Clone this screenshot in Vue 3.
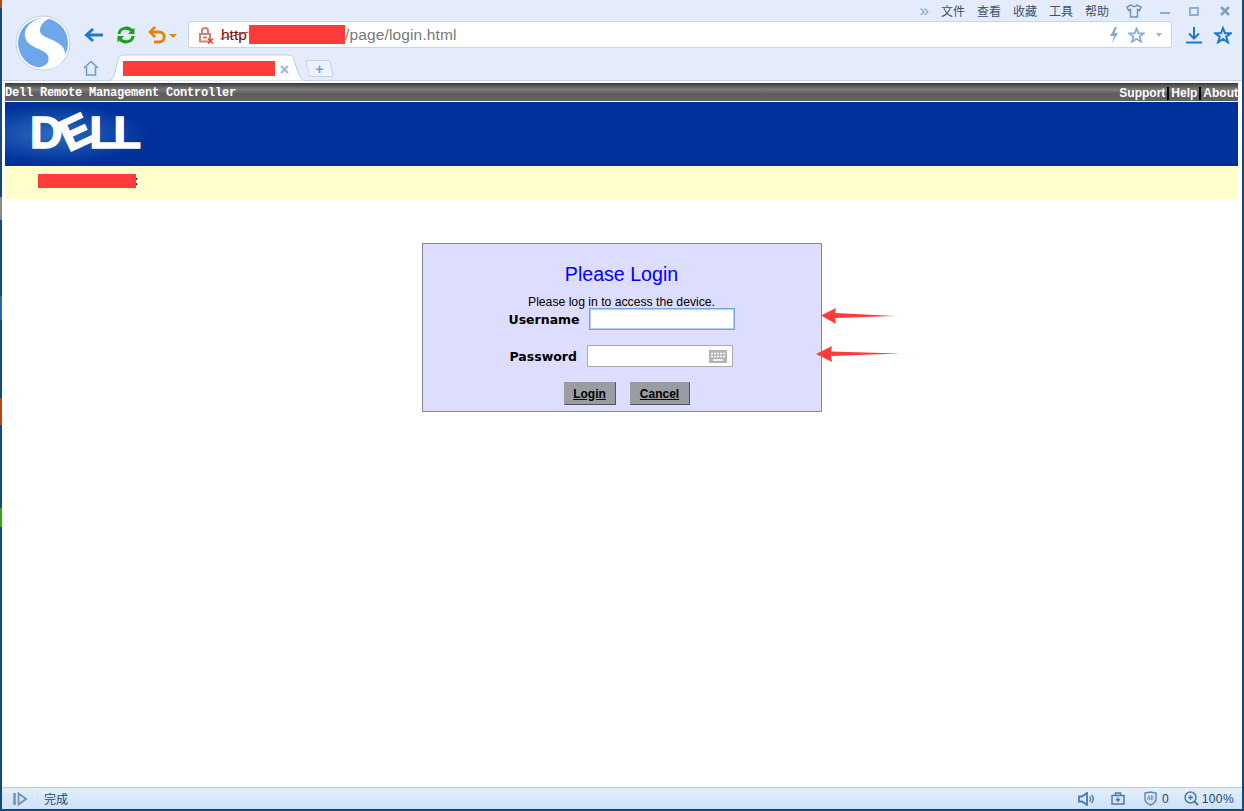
<template>
  <div class="window">
    <header class="toolbar">
      <svg class="logo" width="56" height="56" viewBox="0 0 56 56">
        <circle cx="28" cy="28" r="27" fill="#fff" stroke="#b5d0f0" />
        <circle cx="28" cy="28" r="25" fill="#6ea6ea" />
        <path d="M30 3C18 3 9 12 10 21C11 29 19 32 26 35C32 38 35 41 33 47C31 51 24 53 19 53C28 56 49 55 50 38C50 30 40 26 33 23C28 21 24 18 25 14C26 9 30 5 36 3Z" fill="#fff" />
      </svg>
      <div class="toolbar-main">
        <div class="menu-row">
          <span class="more">»</span>
          <span v-for="item in menus" :key="item" class="menu-item">{{ item }}</span>
          <svg class="shirt" width="16" height="14" viewBox="0 0 16 14">
            <path d="M5 1L1 3L2.500 6.500L4.500 5.500V13H11.500V5.500L13.500 6.500L15 3L11 1C10 3 6 3 5 1Z" fill="none" stroke="#6f93b8" stroke-width="1.500" />
          </svg>
          <span class="win-btn win-min"></span>
          <span class="win-btn win-max"></span>
          <svg class="win-close" width="10" height="10" viewBox="0 0 10 10">
            <path d="M1 1L9 9M9 1L1 9" stroke="#7f9fc2" stroke-width="2.500" />
          </svg>
        </div>

        <div class="address-row">
          <svg width="20" height="16" viewBox="0 0 20 16">
            <path d="M19 8H3M9 2L2.500 8L9 14" fill="none" stroke="#1e7ac8" stroke-width="3" />
          </svg>
          <svg class="reload" width="20" height="20" viewBox="0 0 20 20">
            <path d="M3 9C3.500 3 12 1 16 6" fill="none" stroke="#17a117" stroke-width="3" />
            <path d="M18.500 2.500V9H12Z" fill="#17a117" />
            <path d="M17 11C16.500 17 8 19 4 14" fill="none" stroke="#17a117" stroke-width="3" />
            <path d="M1.500 17.500V11H8Z" fill="#17a117" />
          </svg>
          <svg class="undo" width="18" height="18" viewBox="0 0 18 18">
            <path d="M4 6H11C18 6 18 16 11 16H6" fill="none" stroke="#e5830f" stroke-width="3" />
            <path d="M7 1L2 6L7 11" fill="none" stroke="#e5830f" stroke-width="2.500" />
          </svg>
          <span class="caret caret-orange"></span>

          <div class="address">
            <svg class="lock" width="16" height="18" viewBox="0 0 16 18">
              <path d="M4 8V4.500C4 1 10 1 10 4.500V8" fill="none" stroke="#d08078" stroke-width="2" />
              <path d="M2 8H12V15.500H2Z" fill="none" stroke="#d08078" stroke-width="2" />
              <rect x="5" y="10.500" width="4" height="2" fill="#d08078" />
              <path d="M10 12.500L15 17.500M15 12.500L10 17.500" stroke="#d8453c" stroke-width="1.500" />
            </svg>
            <span class="scheme">http</span>
            <span class="redact redact-host"></span>
            <span class="path">/page/login.html</span>
            <svg class="bolt" width="10" height="16" viewBox="0 0 10 16">
              <path d="M6 0L1 9H5L3 16L9 6H5.500L8 0Z" fill="#86abd6" />
            </svg>
            <svg class="star-small" width="17" height="16" viewBox="0 0 18 17">
              <path d="M9 1.500L11 6.800H16.800L12.200 10.200L13.900 15.800L9 12.500L4.100 15.800L5.800 10.200L1.200 6.800H7Z" fill="none" stroke="#86abd6" stroke-width="1.800" />
            </svg>
            <span class="caret caret-grey"></span>
          </div>

          <svg class="download" width="16" height="18" viewBox="0 0 16 18">
            <path d="M8 1V12M3 7.500L8 12.500L13 7.500" fill="none" stroke="#1e7ac8" stroke-width="2" />
            <path d="M0 16.500H16" stroke="#1e7ac8" stroke-width="2" />
          </svg>
          <svg class="star" width="18" height="18" viewBox="0 0 18 17">
            <path d="M9 1.500L11 6.800H16.800L12.200 10.200L13.900 15.800L9 12.500L4.100 15.800L5.800 10.200L1.200 6.800H7Z" fill="none" stroke="#1e7ac8" stroke-width="2" />
          </svg>
        </div>

        <div class="tab-row">
          <svg class="home" width="16" height="16" viewBox="0 0 16 16">
            <path d="M1 8L8 1.500L15 8M3.500 7V15H12.500V7" fill="none" stroke="#6f9ccb" stroke-width="1.600" />
          </svg>
          <div class="tab">
            <svg class="tab-shape" width="197" height="27" viewBox="0 0 197 27">
              <path d="M0 26.500H1C5 26 6 22 7 18L10 6C11 2 13 1 16 1H180C183 1 185 2 186 6L190 18C192 22 193 26 197 26.500" fill="#fff" stroke="#b9cde8" />
            </svg>
            <span class="redact redact-tab"></span>
            <svg class="tab-close" width="9" height="9" viewBox="0 0 9 9">
              <path d="M1 1L8 8M8 1L1 8" stroke="#9db9da" stroke-width="2" />
            </svg>
          </div>
          <div class="new-tab"><span>+</span></div>
        </div>
      </div>
    </header>

    <main class="page">
      <div class="title-bar">
        <span class="product">Dell Remote Management Controller</span>
        <nav class="links">
          <span v-for="link in links" :key="link" class="link">{{ link }}</span>
        </nav>
      </div>
      <div class="brand">
        <div class="dell"><span>D</span><span class="dell-e">E</span><span>LL</span></div>
      </div>
      <div class="notice"><span class="redact redact-notice"></span><span class="notice-end">:</span></div>

      <section class="login">
        <h1>Please Login</h1>
        <p>Please log in to access the device.</p>
        <div class="field field-user">
          <label>Username</label>
          <div class="input input-focus"></div>
        </div>
        <div class="field field-pass">
          <label>Password</label>
          <div class="input">
            <svg width="18" height="13" viewBox="0 0 18 13">
              <rect width="18" height="13" fill="#b4b4b4" />
              <path d="M2 3.500H16M2 6.500H16" stroke="#fff" stroke-width="1.500" stroke-dasharray="2 1" />
              <path d="M4 10H14" stroke="#fff" stroke-width="1.500" />
            </svg>
          </div>
        </div>
        <div class="buttons">
          <button class="btn btn-login">Login</button>
          <button class="btn btn-cancel">Cancel</button>
        </div>
        <svg class="arrow arrow-user" width="74" height="18" viewBox="0 0 74 18">
          <path d="M0 8.500L15 1L14 6L74 9L14 11L15 17Z" fill="#ff3b3b" />
        </svg>
        <svg class="arrow arrow-pass" width="84" height="18" viewBox="0 0 84 18">
          <path d="M0 9L16 1L15 6.500L84 8.500L15 11L16 17Z" fill="#ff3b3b" />
        </svg>
      </section>
    </main>

    <footer class="status">
      <svg class="panel" width="14" height="14" viewBox="0 0 14 14">
        <path d="M1.500 1V13" stroke="#6f93b8" stroke-width="2.500" />
        <path d="M5.500 1.500L13 7L5.500 12.500Z" fill="none" stroke="#6f93b8" stroke-width="1.800" />
      </svg>
      <span class="status-sep"></span>
      <span class="done">完成</span>
      <svg class="speaker" width="17" height="14" viewBox="0 0 17 14">
        <path d="M1 4.500H4L9 1V13L4 9.500H1Z" fill="none" stroke="#4f7aa5" stroke-width="1.800" />
        <path d="M11.500 4.500C13 6 13 8 11.500 9.500M13.500 3C15.800 5.500 15.800 8.500 13.500 11" fill="none" stroke="#4f7aa5" stroke-width="1.400" />
      </svg>
      <svg class="toolbox" width="14" height="13" viewBox="0 0 14 13">
        <path d="M4.500 3V1H9.500V3M1 3.500H13V12H1ZM7 5.500V10M4.800 7.700H9.200" fill="none" stroke="#4f7aa5" stroke-width="1.500" />
      </svg>
      <svg class="shield" width="13" height="15" viewBox="0 0 13 15">
        <path d="M1 2L6.500 1L12 2V8C12 11 9 13 6.500 14C4 13 1 11 1 8Z" fill="none" stroke="#5f86ad" stroke-width="1.400" />
        <path d="M3.500 9L4.700 4.500L5.900 9M7.300 4.500V9C9.800 9 9.800 4.500 7.300 4.500" fill="none" stroke="#5f86ad" stroke-width=".9" />
      </svg>
      <span class="count">0</span>
      <svg class="zoom" width="15" height="15" viewBox="0 0 15 15">
        <circle cx="6.500" cy="6.500" r="5.500" fill="none" stroke="#4f7aa5" stroke-width="1.500" />
        <path d="M4 6.500H9M6.500 4V9" stroke="#4f7aa5" stroke-width="1.500" />
        <path d="M10.500 10.500L14 14" stroke="#4f7aa5" stroke-width="2" />
      </svg>
      <span class="percent">100%</span>
    </footer>
  </div>
</template>

<script setup>
// entries of the browser menu and of the idrac header
const menus = ['文件', '查看', '收藏', '工具', '帮助']
const links = ['Support', 'Help', 'About']
</script>

<style>
html, body {
  margin: 0;
  overflow: hidden;
}
</style>

<style scoped>
.window {
  box-sizing: border-box;
  width: 1244px;
  height: 811px;
  padding: 0 2px 2px;
  display: flex;
  flex-direction: column;
  background-color: #17487a;
  background-image: linear-gradient(#b5480f 0 8px, #17487a 8px 197px, #8a8a8a 197px 220px, #17487a 220px 296px, #2a68b0 296px 320px, #17487a 320px 398px, #b5480f 398px 425px, #17487a 425px 508px, #3aa50a 508px 527px, #17487a 527px);
  background-size: 2px 100%;
  background-repeat: no-repeat;
  font-family: "Liberation Sans", Arial, sans-serif;
}

/* browser chrome */
.toolbar {
  box-sizing: border-box;
  height: 81px;
  flex: none;
  display: flex;
  padding-left: 13px;
  background: #e4ecfb;
  border-bottom: 1px solid #c5d4ea;
}
.logo {
  margin-top: 15px;
  flex: none;
}
.toolbar-main {
  flex: 1;
  margin-left: 13px;
  margin-right: 10px;
}
.menu-row {
  height: 20px;
  margin-top: 1px;
  display: flex;
  align-items: center;
  justify-content: flex-end;
  font-family: "Noto Sans CJK SC", sans-serif;
  font-size: 12px;
  color: #3b5068;
}
.more {
  margin-right: 12px;
  font-family: "Liberation Sans", sans-serif;
  font-size: 17px;
  color: #7fa3c9;
}
.menu-item {
  margin-right: 12px;
  line-height: 16px;
}
.shirt {
  margin-left: 5px;
}
.win-btn {
  display: block;
  box-sizing: border-box;
}
.win-min {
  width: 10px;
  height: 2px;
  margin: 3px 0 0 18px;
  background: #8fb0d0;
}
.win-max {
  width: 10px;
  height: 9px;
  margin-left: 19px;
  border: 2px solid #8fb0d0;
}
.win-close {
  margin: 0 2px 0 21px;
}

.address-row {
  height: 27px;
  display: flex;
  align-items: center;
}
.reload,
.undo {
  margin-left: 12px;
}
.undo {
  margin-left: 12px;
  margin-right: 3px;
}
.caret {
  width: 0;
  height: 0;
  border-left: 4px solid transparent;
  border-right: 4px solid transparent;
}
.caret-orange {
  margin: 2px 0 0 0;
  border-top: 4px solid #e5830f;
}
.caret-grey {
  margin-left: 11px;
  margin-right: 9px;
  border-left-width: 3px;
  border-right-width: 3px;
  border-top: 4px solid #9fb3c9;
}
.address {
  box-sizing: border-box;
  flex: 1;
  height: 27px;
  margin-left: 11px;
  margin-right: 14px;
  padding-left: 9px;
  display: flex;
  align-items: center;
  background: #fff;
  border: 1px solid #c8d6ea;
  border-radius: 2px;
  font-size: 15.500px;
}
.lock {
  flex: none;
  margin-right: 7px;
}
.scheme {
  position: relative;
  color: #800000;
  width: 28px;
}
/* the browser crosses out the scheme of an untrusted site with a slanted line */
.scheme::after {
  content: "";
  position: absolute;
  left: -1px;
  right: 0;
  top: 9px;
  height: 1px;
  background: #b0403a;
  transform: rotate(-14deg);
}
.path {
  flex: 1;
  color: #777;
  letter-spacing: .14px;
}
.bolt {
  margin-right: 9px;
}
.download {
  flex: none;
}
.star {
  flex: none;
  margin-left: 12px;
}

.tab-row {
  position: relative;
  height: 27px;
  margin-top: 6px;
  display: flex;
  align-items: flex-end;
}
.home {
  margin: 0 9px 5px -1px;
}
.tab {
  position: relative;
  box-sizing: border-box;
  width: 197px;
  height: 27px;
  padding: 7px 0 0 15px;
  display: flex;
  align-items: flex-start;
}
.tab-shape {
  position: absolute;
  left: 0;
  top: 0;
}
.tab-close {
  position: relative;
  margin: 4px 0 0 5px;
}
.new-tab {
  box-sizing: border-box;
  width: 25px;
  height: 17px;
  margin: 0 0 4px 2px;
  transform: skewX(12deg);
  background: #edf3fd;
  border: 1px solid #c3d4ea;
  border-radius: 2px;
  display: flex;
  align-items: center;
  justify-content: center;
  font-size: 15px;
  font-weight: bold;
  color: #7fa3c9;
}
.new-tab span {
  transform: skewX(-12deg);
}

.redact {
  display: block;
  flex: none;
  background: #ff3b3b;
  position: relative;
  z-index: 1;
}
.redact-host {
  width: 96px;
  height: 19px;
}
.redact-tab {
  width: 152px;
  height: 15px;
}
.redact-notice {
  width: 98px;
  height: 14px;
}

/* idrac page */
.page {
  flex: 1;
  min-height: 0;
  background: #fff;
  padding: 2px 4px 0 3px;
}
.title-bar {
  box-sizing: border-box;
  height: 18px;
  padding-top: 2px;
  display: flex;
  align-items: center;
  justify-content: space-between;
  background: linear-gradient(#3a3a3a, #7c7c7c 35%, #5e5e5e 60%, #646464);
  color: #fff;
}
.product {
  font-family: "Liberation Mono", monospace;
  font-size: 12px;
  font-weight: bold;
  letter-spacing: -.2px;
  white-space: nowrap;
}
.links {
  display: flex;
  font-size: 12px;
  font-weight: bold;
}
.link {
  padding-left: 2px;
  margin-left: 2px;
  border-left: 2px solid #000;
  line-height: 13px;
}
.link:first-child {
  border-left: 0;
}
.brand {
  height: 64px;
  margin-top: 1px;
  padding-left: 25px;
  box-sizing: border-box;
  display: flex;
  align-items: center;
  background: radial-gradient(ellipse 95px 30px at 50px 32px, #2a6cc0, transparent), #00309a;
}
.dell {
  display: flex;
  align-items: center;
  font-size: 45px;
  line-height: 46px;
  font-weight: bold;
  color: #fff;
  -webkit-text-stroke: 1.500px #fff;
  letter-spacing: -3.500px;
  margin-bottom: 2px;
}
.dell-e {
  display: block;
  margin: 0 2px;
  transform: rotate(-25deg);
}
.notice {
  box-sizing: border-box;
  height: 33px;
  padding: 8px 0 0 33px;
  display: flex;
  background: #ffffcc;
}
.notice-end {
  margin-left: -2px;
  font-size: 13px;
  line-height: 14px;
  font-weight: bold;
  color: #000;
}
.login {
  position: relative;
  box-sizing: border-box;
  width: 400px;
  height: 169px;
  margin: 44px auto 0;
  padding-top: 18px;
  background: #ddddff;
  border: 1px solid #888;
  text-align: center;
}
.login h1 {
  margin: 0;
  height: 24px;
  font-size: 19.600px;
  line-height: 24px;
  font-weight: normal;
  color: #0000ff;
}
.login p {
  margin: 9px 0 0;
  height: 14px;
  font-size: 12.200px;
  line-height: 14px;
  color: #000;
}
.field {
  display: flex;
  align-items: center;
  height: 22px;
}
.field-user {
  margin-top: -1px;
  padding-left: 86px;
}
.field-pass {
  margin-top: 15px;
  padding-left: 87px;
}
.field label {
  font-family: "DejaVu Sans", sans-serif;
  font-size: 12.500px;
  font-weight: bold;
  color: #000;
}
.field-user label {
  width: 80px;
  text-align: left;
}
.field-pass label {
  width: 77px;
  text-align: left;
}
.input {
  box-sizing: border-box;
  width: 146px;
  height: 22px;
  background: #fff;
  border: 1px solid #aaa;
  display: flex;
  align-items: center;
  justify-content: flex-end;
  padding-right: 5px;
}
.input-focus {
  border: 1px solid #7aa0e8;
  box-shadow: inset 0 0 0 1px #b9cdf3;
}
.buttons {
  margin-top: 15px;
  padding-left: 10px;
  display: flex;
  justify-content: center;
  gap: 14px;
}
.btn {
  box-sizing: border-box;
  height: 23px;
  padding: 0;
  background: #999ca3;
  border: 1px solid #999ca3;
  border-right-color: #555;
  border-bottom-color: #555;
  font-family: "Liberation Sans", sans-serif;
  font-size: 12px;
  font-weight: bold;
  text-decoration: underline;
  color: #000;
}
.btn-login {
  width: 52px;
}
.btn-cancel {
  width: 60px;
}
.arrow {
  position: absolute;
}
.arrow-user {
  left: 398px;
  top: 63px;
}
.arrow-pass {
  left: 393px;
  top: 101px;
}

/* status bar */
.status {
  box-sizing: border-box;
  height: 22px;
  flex: none;
  display: flex;
  align-items: center;
  padding: 0 8px 0 11px;
  background: linear-gradient(#e2eefc, #cfe2f8);
  border-top: 1px solid #b8cde6;
  font-size: 12px;
  color: #17487a;
}
.status-sep {
  width: 1px;
  height: 18px;
  margin: 0 6px 0 10px;
  background: #d5e4f6;
}
.done {
  flex: 1;
  font-family: "Noto Sans CJK SC", sans-serif;
}
.toolbox {
  margin-left: 16px;
}
.shield {
  margin-left: 19px;
}
.count {
  margin-left: 5px;
}
.zoom {
  margin-left: 15px;
}
.percent {
  margin-left: 3px;
  letter-spacing: .4px;
}
</style>
